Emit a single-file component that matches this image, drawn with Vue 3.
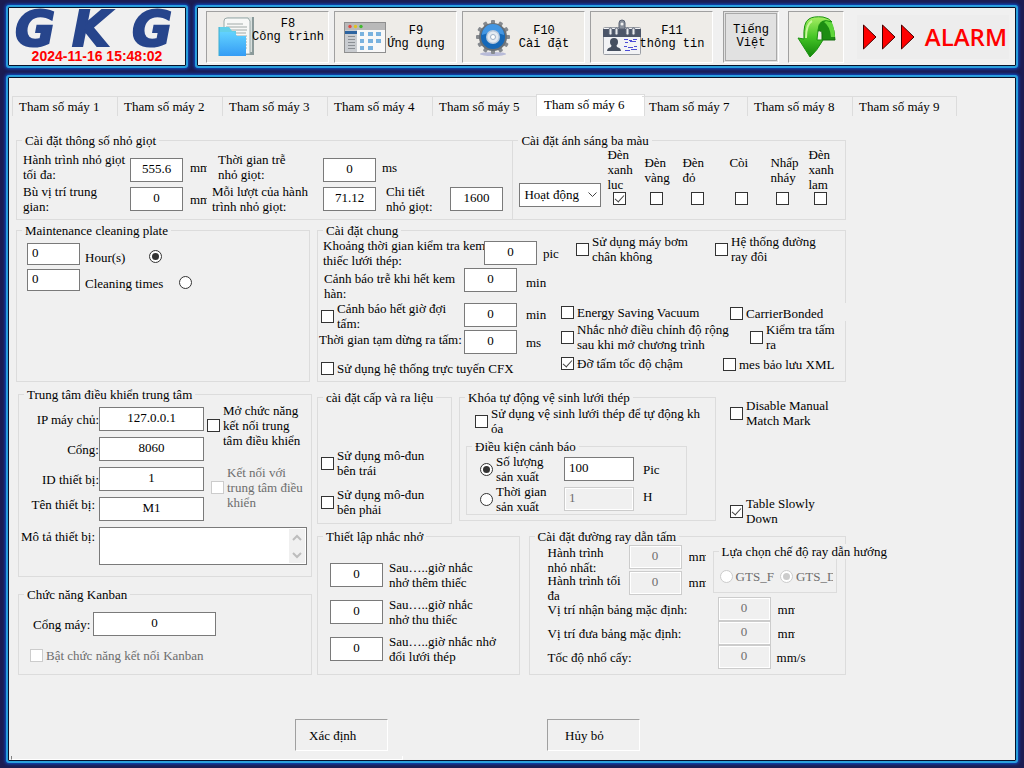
<script setup>
import { ref } from 'vue'

const activeTab = ref(6)
const hourOrTimes = ref('hour')
const alarmBy = ref('quantity')
const lamps = [
  { id: 'lamp-green', lines: 'Đèn\nxanh\nluc', on: true, cls: 'w37' },
  { id: 'lamp-yellow', lines: 'Đèn\nvàng', on: false, cls: 'w38' },
  { id: 'lamp-red', lines: 'Đèn\nđỏ', on: false, cls: 'w47' },
  { id: 'buzzer', lines: 'Còi', on: false, cls: 'w41' },
  { id: 'blink', lines: 'Nhấp\nnháy', on: false, cls: 'w38' },
  { id: 'lamp-blue', lines: 'Đèn\nxanh\nlam', on: false, cls: 'w35' }
]
const reminders = [
  { id: 'rem-add', lines: 'Sau…..giờ nhắc\nnhở thêm thiếc' },
  { id: 'rem-take', lines: 'Sau…..giờ nhắc\nnhở thu thiếc' },
  { id: 'rem-stencil', lines: 'Sau…..giờ nhắc nhở\nđổi lưới thép' }
]
const railRows = [
  { id: 'rail-in', label: 'Vị trí nhận bảng mặc định:', unit: 'mm', cut: true },
  { id: 'rail-out', label: 'Vị trí đưa bảng mặc định:', unit: 'mm', cut: true },
  { id: 'rail-speed', label: 'Tốc độ nhổ cấy:', unit: 'mm/s', cut: false }
]
const teeth = [0, 30, 60, 90, 120, 150, 180, 210, 240, 270, 300, 330]
</script>

<template>
  <div class="app">
    <header class="top">
      <section class="panel brand">
        <svg class="logo" viewBox="0 0 170 40" role="img" aria-label="GKG">
          <g class="logo-text">
            <text x="3" y="37">G</text>
            <text x="60" y="37">K</text>
            <text x="120" y="37">G</text>
          </g>
        </svg>
        <time class="clock">2024-11-16 15:48:02</time>
      </section>

      <nav class="panel toolbar">
        <button class="tool high" type="button">
          <svg viewBox="0 0 42 42" aria-hidden="true">
            <path d="M12 1 h26 v38 h-26z" fill="#8b9a9a" />
            <path d="M10 3 q0 -2 3 -2 h23 v35 h-26z" fill="#d8dfdd" />
            <path d="M8 5 q0 -3 3 -3 h21 l2 3 v33 h-26z" fill="#f7f8f7" stroke="#9aa9a8" stroke-width="1" />
            <path d="M11 8h16M10 11h21M11 14h20M12 17h18M13 20h18M25 23h6M27 26h4M28 29h3M28 32h3" stroke="#a1aaa8" stroke-width="1" />
            <path d="M3 11 h10 l3 4 h4 v25 h-17z" fill="#62cfe8" />
            <path d="M3 16 h15 l3 4 h9 v20 h-27z" fill="url(#folder)" />
            <path d="M3 40 V11" stroke="#3aaed0" />
            <defs>
              <linearGradient id="folder" x1="0" y1="0" x2="0" y2="1">
                <stop offset="0" stop-color="#62d2ff" />
                <stop offset="1" stop-color="#359cf5" />
              </linearGradient>
            </defs>
          </svg>
          <span>F8<br />Công trình</span>
        </button>
        <button class="tool" type="button">
          <svg viewBox="0 0 42 42" aria-hidden="true">
            <rect x="0.500" y="6.500" width="41" height="30" fill="#f8f8f8" stroke="#8f8f8f" />
            <rect x="1" y="7" width="40" height="7" fill="#b9b9b9" />
            <circle cx="6" cy="10.500" r="1.700" fill="#e34a44" />
            <circle cx="11.500" cy="10.500" r="1.700" fill="#e0c21f" />
            <circle cx="17" cy="10.500" r="1.700" fill="#41b92e" />
            <rect x="1" y="14" width="12" height="22" fill="#c9ccd0" />
            <rect x="1" y="15" width="12" height="3" fill="#2d64a0" />
            <path d="M4 20.500h7M4 23.500h7M4 26.500h7M4 29.500h7M4 32.500h7" stroke="#8b8f94" />
            <g fill="#79b2df">
              <rect x="16" y="16" width="4" height="4" /><rect x="24" y="16" width="5" height="4" /><rect x="32" y="16" width="5" height="4" />
              <rect x="16" y="23" width="4" height="4" /><rect x="24" y="23" width="5" height="4" /><rect x="32" y="23" width="5" height="4" />
              <rect x="16" y="30" width="4" height="4" /><rect x="24" y="30" width="5" height="4" />
            </g>
          </svg>
          <span>F9<br />Ứng dụng</span>
        </button>
        <button class="tool" type="button">
          <svg viewBox="0 0 42 42" aria-hidden="true">
            <ellipse cx="21" cy="38" rx="13" ry="2" fill="#b8bbd8" />
            <g fill="#85898e">
              <rect v-for="a in teeth" :key="a" x="19" y="4" width="4" height="6" rx="1" :transform="`rotate(${a} 21 21)`" />
            </g>
            <circle cx="21" cy="21" r="14" fill="#6a7076" />
            <circle cx="21" cy="21" r="12" fill="#1568b8" />
            <path d="M10 19 a11 11 0 0 1 22 0 q-11 -5 -22 0z" fill="#4396e2" />
            <circle cx="21" cy="21" r="7" fill="#b9c9dc" />
            <circle cx="21" cy="21" r="5.500" fill="#e4eaf1" />
            <circle cx="21" cy="21" r="2.500" fill="#fff" stroke="#9db0c6" stroke-width="1" />
          </svg>
          <span>F10<br />Cài đặt</span>
        </button>
        <button class="tool" type="button">
          <svg viewBox="0 0 42 42" aria-hidden="true">
            <rect x="3.500" y="11.500" width="37" height="27" rx="1" fill="#f2f3f5" stroke="#9a9ea5" />
            <path d="M3 13 h38 v8 h-38z" fill="#4b5568" />
            <g fill="#e9ebee" stroke="#5b6475" stroke-width="1">
              <rect x="9" y="12" width="3" height="7" rx="1.500" /><rect x="15" y="12" width="3" height="7" rx="1.500" />
              <rect x="26" y="12" width="3" height="7" rx="1.500" /><rect x="32" y="12" width="3" height="7" rx="1.500" />
            </g>
            <path d="M19 13 V7 q0 -3 3 -3 t3 3 V13z" fill="#8a919c" stroke="#5a6373" stroke-width="1" />
            <circle cx="22" cy="8" r="1.500" fill="#f0f0f0" />
            <circle cx="14" cy="26" r="4" fill="#454f5f" />
            <path d="M12 28h4l1 3q4 1 4 4h-14q0-3 4-4z" fill="#454f5f" />
            <path d="M24 23.500h4M29 24.500h3M33 23.500h4M25 26.500h3M30 25.500h6M24 30.500h3M28 31.500h5M34 30.500h3M25 34.500h5M31 33.500h6" stroke="#4c4cd6" stroke-width="1" />
          </svg>
          <span>F11<br />thông tin</span>
        </button>
        <button class="lang" type="button"><span>Tiếng<br />Việt</span></button>
        <button class="back" type="button" aria-label="Quay lại">
          <svg viewBox="0 0 54 50" aria-hidden="true">
            <defs>
              <linearGradient id="arrow" x1="0" y1="0" x2="0" y2="1">
                <stop offset="0" stop-color="#a6ee63" />
                <stop offset="0.500" stop-color="#45c526" />
                <stop offset="1" stop-color="#12850a" />
              </linearGradient>
            </defs>
            <path d="M26 12 q2 -6 8 -6 q11 1 12 22 h-13 v-6 q0 -4 -4 -3z" fill="#1d8d12" stroke="#126a0c" stroke-width="1" />
            <path d="M35 10 q6 4 7 15 h4 q-1 -16 -7 -18z" fill="#5fd53b" />
            <path d="M21 45 L9 26 l6 1 Q14 10 20 7 Q24 4 34 5 q6 1 9 5 q-13 -5 -14 8 l-1 10 h6 Q28 39 21 45z" fill="url(#arrow)" stroke="#1c9311" stroke-width="1" />
            <path d="M17 26 q0 -14 6 -17" fill="none" stroke="#c8f79b" stroke-width="2" />
          </svg>
        </button>
        <div class="alarm" role="status">
          <svg viewBox="0 0 52 26" aria-hidden="true">
            <g fill="#f00" stroke="#400" stroke-width="1">
              <path d="M0.500 1 L13 13 L0.500 25z" /><path d="M19.500 1 L32 13 L19.500 25z" /><path d="M38.500 1 L51 13 L38.500 25z" />
            </g>
          </svg>
          <span>ALARM</span>
        </div>
      </nav>
    </header>

    <main class="panel main">
      <div class="tabs" role="tablist">
        <button
          v-for="n in 9" :key="n" type="button" role="tab" class="tab"
          :class="{ active: activeTab === n }" :aria-selected="activeTab === n" @click="activeTab = n"
        >Tham số máy {{ n }}</button>
      </div>

      <form class="content" @submit.prevent>
        <div class="row first">
          <fieldset>
            <legend>Cài đặt thông số nhỏ giọt</legend>
            <div class="drip">
              <label for="drip-max">Hành trình nhỏ giọt<br />tối đa:</label>
              <input id="drip-max" class="low" type="text" value="555.6" />
              <span class="unit cut">mm</span>
              <label for="drip-delay" class="pad6">Thời gian trễ<br />nhỏ giọt:</label>
              <input id="drip-delay" class="low" type="text" value="0" />
              <span class="unit">ms</span>
              <span></span>
              <label for="drip-mid">Bù vị trí trung<br />gian:</label>
              <input id="drip-mid" type="text" value="0" />
              <span class="unit cut">mm</span>
              <label for="drip-step">Mỗi lượt của hành<br />trình nhỏ giọt:</label>
              <input id="drip-step" type="text" value="71.12" />
              <label for="drip-detail" class="pad10">Chi tiết<br />nhỏ giọt:</label>
              <input id="drip-detail" type="text" value="1600" />
            </div>
          </fieldset>
          <fieldset class="joined">
            <legend>Cài đặt ánh sáng ba màu</legend>
            <div class="lamps">
              <div class="select">
                <select aria-label="Cài đặt ánh sáng ba màu"><option>Hoạt động</option></select>
                <svg viewBox="0 0 9 5" aria-hidden="true"><path d="M0.500 0.500 L4.500 4.500 L8.500 0.500" fill="none" stroke="#444" /></svg>
              </div>
              <label v-for="l in lamps" :key="l.id" class="lamp" :class="l.cls" :for="l.id">
                <span class="lamp-name"><span>{{ l.lines }}</span></span>
                <input :id="l.id" type="checkbox" :checked="l.on" />
              </label>
            </div>
          </fieldset>
        </div>

        <div class="row second">
          <fieldset>
            <legend>Maintenance cleaning plate</legend>
            <div class="clean">
              <div class="clean-row">
                <input type="text" value="0" class="start short" aria-label="Hour(s)" />
                <label for="by-hour" class="hour">Hour(s)</label>
                <input id="by-hour" v-model="hourOrTimes" type="radio" name="clean" value="hour" />
              </div>
              <div class="clean-row">
                <input type="text" value="0" class="start short" aria-label="Cleaning times" />
                <label for="by-times" class="times">Cleaning times</label>
                <input id="by-times" v-model="hourOrTimes" type="radio" name="clean" value="times" />
              </div>
            </div>
          </fieldset>

          <fieldset>
            <legend>Cài đặt chung</legend>
            <div class="general">
              <div class="general-left">
                <div class="g-row g1">
                  <label for="g-check">Khoảng thời gian kiểm tra kem<br />thiếc lưới thép:</label>
                  <input id="g-check" type="text" value="0" /><span>pic</span>
                </div>
                <div class="g-row g2">
                  <label for="g-paste">Cảnh báo trễ khi hết kem<br />hàn:</label>
                  <input id="g-paste" type="text" value="0" /><span>min</span>
                </div>
                <div class="g-row g3">
                  <label class="check"><input type="checkbox" /><span>Cảnh báo hết giờ đợi<br />tấm:</span></label>
                  <input type="text" value="0" aria-label="Cảnh báo hết giờ đợi tấm" /><span>min</span>
                </div>
                <div class="g-row g4">
                  <label for="g-pause">Thời gian tạm dừng ra tấm:</label>
                  <input id="g-pause" type="text" value="0" /><span>ms</span>
                </div>
                <label class="check g5"><input type="checkbox" /><span>Sử dụng hệ thống trực tuyến CFX</span></label>
              </div>
              <div class="general-right">
                <div class="opts o1">
                  <label class="check w139"><input type="checkbox" /><span>Sử dụng máy bơm<br />chân không</span></label>
                  <label class="check"><input type="checkbox" /><span>Hệ thống đường<br />ray đôi</span></label>
                </div>
                <div class="opts o2">
                  <label class="check w169"><input type="checkbox" /><span>Energy Saving Vacuum</span></label>
                  <label class="check over"><input type="checkbox" /><span>CarrierBonded</span></label>
                </div>
                <div class="opts o3">
                  <label class="check w189"><input type="checkbox" /><span>Nhắc nhở điều chỉnh độ rộng<br />sau khi mở chương trình</span></label>
                  <label class="check"><input type="checkbox" /><span>Kiểm tra tấm<br />ra</span></label>
                </div>
                <div class="opts o4">
                  <label class="check w162"><input type="checkbox" checked /><span>Đỡ tấm tốc độ chậm</span></label>
                  <label class="check mes"><input type="checkbox" /><span>mes bảo lưu XML</span></label>
                </div>
              </div>
            </div>
          </fieldset>
        </div>

        <div class="row third">
          <div class="stack">
            <fieldset>
              <legend>Trung tâm điều khiển trung tâm</legend>
              <div class="center">
                <label for="c-ip">IP máy chủ:</label><input id="c-ip" type="text" value="127.0.0.1" />
                <label for="c-port">Cổng:</label><input id="c-port" type="text" value="8060" />
                <label for="c-id">ID thiết bị:</label><input id="c-id" type="text" value="1" />
                <label for="c-name" class="near">Tên thiết bị:</label><input id="c-name" type="text" value="M1" />
                <label for="c-desc" class="near desc">Mô tả thiết bị:</label>
                <div class="area">
                  <textarea id="c-desc"></textarea>
                  <svg viewBox="0 0 16 34" aria-hidden="true">
                    <rect width="16" height="34" fill="#f0f0f0" />
                    <path d="M4 11 L8 7 L12 11M4 24 L8 28 L12 24" fill="none" stroke="#bdbdbd" stroke-width="2" />
                  </svg>
                </div>
                <div class="center-opts">
                  <label class="check"><input type="checkbox" /><span>Mở chức năng<br />kết nối trung<br />tâm điều khiển</span></label>
                  <label class="check off"><input type="checkbox" disabled /><span>Kết nối với<br />trung tâm điều<br />khiển</span></label>
                </div>
              </div>
            </fieldset>
            <fieldset>
              <legend>Chức năng Kanban</legend>
              <div class="kanban">
                <div class="kanban-port">
                  <label for="k-port">Cổng máy:</label><input id="k-port" type="text" value="0" />
                </div>
                <label class="check off"><input type="checkbox" disabled /><span>Bật chức năng kết nối Kanban</span></label>
              </div>
            </fieldset>
          </div>

          <div class="side">
            <div class="side-top">
              <fieldset>
                <legend>cài đặt cấp và ra liệu</legend>
                <div class="feed">
                  <label class="check"><input type="checkbox" /><span>Sử dụng mô-đun<br />bên trái</span></label>
                  <label class="check"><input type="checkbox" /><span>Sử dụng mô-đun<br />bên phải</span></label>
                </div>
              </fieldset>
              <fieldset>
                <legend>Khóa tự động vệ sinh lưới thép</legend>
                <div class="lock">
                  <label class="check lock-use"><input type="checkbox" /><span>Sử dụng vệ sinh lưới thép để tự động kh<br />óa</span></label>
                  <fieldset class="cond">
                    <legend>Điều kiện cảnh báo</legend>
                    <div class="cond-row">
                      <label class="check"><input v-model="alarmBy" type="radio" name="cond" value="quantity" /><span>Số lượng<br />sản xuất</span></label>
                      <input type="text" value="100" class="start" aria-label="Số lượng sản xuất" /><span>Pic</span>
                    </div>
                    <div class="cond-row">
                      <label class="check"><input v-model="alarmBy" type="radio" name="cond" value="time" /><span>Thời gian<br />sản xuất</span></label>
                      <input type="text" value="1" class="start" disabled aria-label="Thời gian sản xuất" /><span class="hours">H</span>
                    </div>
                  </fieldset>
                </div>
              </fieldset>
              <div class="extra">
                <label class="check"><input type="checkbox" /><span>Disable Manual<br />Match Mark</span></label>
                <label class="check"><input type="checkbox" checked /><span>Table Slowly<br />Down</span></label>
              </div>
            </div>

            <div class="side-bottom">
              <fieldset>
                <legend>Thiết lập nhắc nhở</legend>
                <div class="remind">
                  <div v-for="r in reminders" :key="r.id" class="remind-row">
                    <input :id="r.id" type="text" value="0" /><label :for="r.id">{{ r.lines }}</label>
                  </div>
                </div>
              </fieldset>
              <fieldset>
                <legend>Cài đặt đường ray dẫn tấm</legend>
                <div class="rail">
                  <div class="rail-top">
                    <div class="rail-grid">
                      <label for="r-min">Hành trình<br />nhỏ nhất:</label><input id="r-min" type="text" value="0" disabled /><span class="unit cut">mm</span>
                      <label for="r-max" class="second-label">Hành trình tối<br />đa</label><input id="r-max" type="text" value="0" disabled /><span class="unit cut">mm</span>
                    </div>
                    <fieldset class="mode">
                      <legend>Lựa chọn chế độ ray dẫn hướng</legend>
                      <div class="mode-row">
                        <label class="check off"><input type="radio" name="gts" disabled /><span>GTS_F</span></label>
                        <label class="check off"><input type="radio" name="gts" disabled checked /><span class="clip">GTS_D</span></label>
                      </div>
                    </fieldset>
                  </div>
                  <div v-for="r in railRows" :key="r.id" class="rail-row">
                    <label :for="r.id">{{ r.label }}</label>
                    <input :id="r.id" type="text" value="0" disabled />
                    <span :class="{ unit: true, cut: r.cut }">{{ r.unit }}</span>
                  </div>
                </div>
              </fieldset>
            </div>
          </div>
        </div>

        <div class="actions">
          <button type="submit">Xác định</button>
          <button type="button" class="cancel">Hủy bỏ</button>
        </div>
      </form>
      <div class="groove"></div>
    </main>
  </div>
</template>

<style>
body {
  background: #1b1c52;
}
</style>

<style scoped>
* {
  box-sizing: border-box;
}
.app {
  display: flex;
  flex-direction: column;
  gap: 7px;
  min-height: 100vh;
  padding: 5px 6px;
  font: 13px/15px "Liberation Serif", "Times New Roman", serif;
  color: #000;
}
.panel {
  background: #f0f0f0;
  border: 2px solid #2a9fdc;
  border-radius: 3px;
  box-shadow: inset 0 0 0 1px #04122c, 0 0 3px 1px #0a4cc8;
}
.top {
  display: flex;
  gap: 7px;
}
.brand {
  display: flex;
  flex-direction: column;
  align-items: center;
  width: 182px;
  padding: 2px 4px 0;
}
.logo {
  width: 170px;
  height: 40px;
  overflow: visible;
}
.logo-text {
  font: italic bold 49px "DejaVu Sans", sans-serif;
  fill: #27458c;
  stroke: #27458c;
  stroke-width: 2px;
}
.clock {
  font: bold 14px/14px "Liberation Sans", Arial, sans-serif;
  color: #f00;
}
.toolbar {
  flex: 1;
  display: flex;
  align-items: center;
  gap: 5px;
  height: 63px;
  padding: 0 7px 0 9px;
}
button {
  font: inherit;
  color: inherit;
  margin: 0;
}
.tool,
.lang,
.back {
  height: 52px;
  padding: 0;
  font: 12px/13px "Liberation Mono", monospace;
  background: #eeece8;
  border: 1px solid;
  border-color: #a0a0a0 #fff #fff #a0a0a0;
}
.tool {
  display: flex;
  align-items: center;
  width: 123px;
  padding-left: 9px;
}
.tool svg {
  flex: none;
  width: 42px;
  height: 42px;
}
.tool span {
  flex: 1;
  position: relative;
  margin-left: -10px;
  padding-top: 2px;
  white-space: nowrap;
  text-align: center;
}
.tool.high span {
  padding: 0 0 11px;
}
.lang {
  width: 56px;
  margin-left: 5px;
  padding: 1px;
  background: #e1e1e1;
}
.lang span {
  display: flex;
  align-items: center;
  justify-content: center;
  height: 48px;
  border: 1px solid #a8a8a8;
}
.back {
  width: 56px;
  margin-left: 4px;
}
.back svg {
  display: block;
  width: 54px;
  height: 50px;
}
.alarm {
  display: flex;
  align-items: center;
  gap: 10px;
  height: 44px;
  margin-left: auto;
  padding: 0 2px 0 6px;
  background: #ededed;
  color: #f00;
  font: 600 24px/44px "Open Sans", "Noto Sans", sans-serif;
}
.alarm svg {
  width: 52px;
  height: 26px;
}
.main {
  flex: 1;
  display: flex;
  flex-direction: column;
  padding: 17px 1px 1px;
}
.tabs {
  display: flex;
  align-items: flex-end;
  padding-left: 3px;
}
.tab {
  width: 105px;
  height: 20px;
  padding: 0 0 0 6px;
  text-align: left;
  white-space: nowrap;
  background: none;
  border: solid #dcdcdc;
  border-width: 1px 0 0 1px;
}
.tab:last-child {
  border-right-width: 1px;
}
.tab.active {
  width: 109px;
  height: 22px;
  margin: 0 -3px 0 -1px;
  padding: 0 0 2px 7px;
  background: #fff;
  border-right-width: 1px;
}
.tab.active + .tab {
  border-left: 0;
  padding-left: 7px;
}
.content {
  flex: 1;
  padding: 17px 0 0 7px;
}
.row {
  display: grid;
  margin-right: 169px;
}
.first {
  grid-template-columns: 498fr 333fr;
}
.second {
  grid-template-columns: 294fr 529fr;
  gap: 7px;
  margin-top: 3px;
}
.third {
  grid-template-columns: 294px 1fr;
  gap: 5px;
  margin: 5px 169px 0 2px;
}
fieldset {
  min-width: 0;
  margin: 0;
  padding: 0;
  border: 1px solid #dcdcdc;
}
legend {
  margin-left: 5px;
  padding: 0 3px;
  line-height: 15px;
  white-space: nowrap;
}
input,
textarea,
select {
  font: inherit;
  color: inherit;
  margin: 0;
  flex: none;
}
input[type='text'] {
  width: 53px;
  height: 24px;
  padding: 0 4px 2px;
  border: 1px solid #7a7a7a;
  border-radius: 0;
  background: #fff;
  text-align: center;
}
input[type='text'].start {
  text-align: left;
}
input[type='text'].short {
  height: 22px;
}
input[type='text']:disabled {
  color: #6d6d6d;
  background: #f0f0f0;
  border-color: #ccc;
  box-shadow: inset 0 0 0 1px #fff;
}
input[type='checkbox'],
input[type='radio'] {
  appearance: none;
  display: grid;
  place-items: center;
  width: 13px;
  height: 13px;
  border: 1px solid #333;
  background: #fff;
}
input[type='radio'] {
  border-radius: 50%;
}
input[type='checkbox']:checked::before {
  content: '';
  width: 4px;
  height: 8px;
  margin-bottom: 2px;
  border: solid #444;
  border-width: 0 1px 1px 0;
  transform: rotate(42deg);
}
input[type='radio']:checked::before {
  content: '';
  width: 7px;
  height: 7px;
  border-radius: 50%;
  background: #333;
}
input[type='checkbox']:disabled,
input[type='radio']:disabled {
  border-color: #ccc;
}
input[type='radio']:disabled::before {
  background: #ccc;
}
.check {
  display: flex;
  align-items: center;
  gap: 3px;
  white-space: nowrap;
}
.off {
  color: #6d6d6d;
}
.unit {
  padding-left: 6px;
  white-space: nowrap;
}
.cut {
  width: 17px;
  padding: 0;
  margin-left: 7px;
  overflow: hidden;
}
.drip {
  display: grid;
  grid-template-columns: 107px 53px 29px 111px 53px 74px 53px;
  grid-auto-rows: 30px;
  row-gap: 2px;
  align-items: center;
  padding: 4px 0 5px 6px;
  white-space: nowrap;
}
.low {
  align-self: end;
}
.pad6 {
  padding-left: 6px;
}
.pad10 {
  padding-left: 10px;
}
.joined {
  margin-left: -1px;
}
.lamps {
  display: flex;
  align-items: flex-end;
  margin-top: -1px;
  padding: 0 0 10px 6px;
}
.select {
  position: relative;
  margin: 0 6px 1px 0;
}
.select select {
  appearance: none;
  display: block;
  width: 82px;
  height: 24px;
  padding: 0 4px 2px;
  border: 1px solid #7a7a7a;
  border-radius: 0;
  background: #fff;
}
.select svg {
  position: absolute;
  right: 4px;
  top: 9px;
  width: 9px;
  height: 5px;
}
.lamp {
  display: flex;
  flex-direction: column;
  align-items: flex-start;
}
.lamp input {
  margin: 0 0 3px 6px;
}
.lamp-name {
  display: flex;
  align-items: center;
  height: 45px;
  white-space: pre;
}
.lamp-name span {
  min-height: 30px;
}
.w35 {
  width: 35px;
}
.w37 {
  width: 37px;
}
.w38 {
  width: 38px;
}
.w41 {
  width: 41px;
}
.w47 {
  width: 47px;
}
.w47 input {
  margin-left: 9px;
}
.clean {
  display: flex;
  flex-direction: column;
  gap: 4px;
  padding: 5px 0 0 10px;
}
.clean-row {
  display: flex;
  align-items: flex-end;
}
.clean-row label {
  margin-left: 5px;
}
.clean-row input[type='radio'] {
  margin-bottom: 2px;
}
.hour {
  width: 64px;
}
.times {
  width: 94px;
}
.general {
  display: flex;
  white-space: nowrap;
}
.general-left {
  width: 243px;
  padding: 0 0 5px;
}
.g-row {
  display: flex;
}
.g1 {
  align-items: center;
  height: 30px;
  padding-left: 5px;
}
.g1 label {
  width: 161px;
}
.g1 span {
  margin-left: 6px;
}
.g2 {
  height: 34px;
  padding-left: 6px;
}
.g2 label {
  width: 140px;
  padding-top: 3px;
}
.g-row > input + span {
  padding-left: 9px;
}
.g1 > input + span {
  padding-left: 0;
}
.g2 > input + span {
  padding-top: 7px;
}
.g3 {
  align-items: center;
  height: 28px;
  padding-left: 3px;
}
.g3 .check {
  width: 143px;
}
.g3 > input,
.g3 > span {
  margin-bottom: 3px;
}
.g4 {
  align-items: center;
  padding-left: 1px;
}
.g4 label {
  width: 145px;
  padding-bottom: 6px;
}
.g5 {
  margin-top: 7px;
  padding-left: 3px;
}
.general-right {
  flex: 1;
  margin-top: -4px;
}
.opts {
  display: flex;
}
.o1 {
  padding-left: 15px;
}
.o2 {
  margin-top: 39px;
}
.over {
  position: relative;
  flex: 1;
  margin-right: -1px;
  padding-top: 3px;
  background: #f0f0f0;
}
.o3 {
  margin-top: 1px;
}
.o4 {
  margin-top: 2px;
}
.mes {
  padding-top: 3px;
}
.w139 {
  width: 139px;
}
.w169 {
  width: 169px;
}
.w189 {
  width: 189px;
}
.w162 {
  width: 162px;
}
.stack {
  display: flex;
  flex-direction: column;
  gap: 10px;
}
.center {
  display: grid;
  grid-template-columns: 80px 105px 1fr;
  grid-template-rows: repeat(4, 24px) 38px;
  row-gap: 6px;
  align-items: center;
  padding: 5px 4px 11px 0;
  white-space: nowrap;
}
.center > label {
  grid-column: 1;
  text-align: right;
}
.center > input[type='text'] {
  width: 105px;
}
.center > .near {
  align-self: start;
  padding-right: 4px;
}
.center > .desc {
  padding-top: 2px;
}
.area {
  grid-column: 2 / 4;
  display: flex;
  height: 38px;
  padding: 1px;
  border: 1px solid #7a7a7a;
  background: #fff;
}
.area textarea {
  flex: 1;
  min-width: 0;
  padding: 2px;
  border: 0;
  resize: none;
  overflow: hidden;
  background: #fff;
}
.area svg {
  width: 16px;
  height: 34px;
}
.center-opts {
  grid-column: 3;
  grid-row: 1 / 5;
  align-self: start;
  display: flex;
  flex-direction: column;
  gap: 17px;
  margin-top: -4px;
  padding-left: 3px;
}
.center-opts .off {
  padding-left: 4px;
}
.kanban {
  padding: 10px 0 11px 11px;
}
.kanban-port {
  display: flex;
  align-items: center;
  gap: 3px;
  margin-bottom: 12px;
  padding-left: 3px;
}
.kanban-port label {
  width: 57px;
  white-space: nowrap;
}
.kanban-port input[type='text'] {
  width: 123px;
}
.side {
  display: flex;
  flex-direction: column;
  padding-top: 3px;
}
.side-top {
  display: grid;
  grid-template-columns: 135px 257px 1fr;
  column-gap: 7px;
  align-items: start;
  min-height: 139px;
}
.feed {
  display: flex;
  flex-direction: column;
  gap: 9px;
  padding: 43px 0 6px 3px;
}
.lock {
  padding: 1px 28px 5px 6px;
}
.lock-use {
  padding-left: 9px;
}
.cond {
  margin-top: 3px;
}
.cond-row {
  display: flex;
  align-items: center;
  height: 30px;
  padding-left: 13px;
}
.cond-row .check {
  width: 84px;
}
.cond-row input[type='text'] {
  width: 70px;
}
.cond-row > span {
  margin-left: 9px;
}
.cond-row > .hours {
  padding-bottom: 6px;
}
.extra {
  display: flex;
  flex-direction: column;
  gap: 68px;
  padding: 8px 0 0 7px;
}
.side-bottom {
  flex: 1;
  display: grid;
  grid-template-columns: 203fr 318fr;
  gap: 9px;
}
.remind {
  display: flex;
  flex-direction: column;
  gap: 7px;
  padding: 16px 0 0 12px;
}
.remind-row {
  display: flex;
  align-items: center;
  gap: 6px;
  white-space: pre;
}
.rail {
  padding: 1px 8px 3px 18px;
  white-space: nowrap;
}
.rail-top {
  display: flex;
  align-items: flex-start;
  height: 52px;
}
.rail-grid {
  display: grid;
  grid-template-columns: 81px 53px 31px;
  grid-auto-rows: 26px;
  align-items: start;
}
.rail-grid .unit {
  padding-top: 4px;
}
.second-label {
  padding-top: 2px;
}
.mode {
  flex: 1;
  margin-top: -1px;
}
.mode legend {
  position: relative;
  width: max-content;
  background: #f0f0f0;
}
.mode-row {
  display: flex;
  gap: 6px;
  padding: 10px 4px 8px 6px;
}
.clip {
  width: 37px;
  overflow: hidden;
}
.rail-row {
  display: flex;
  align-items: center;
}
.rail-row label {
  width: 170px;
}
.actions {
  display: flex;
  gap: 159px;
  margin-top: 44px;
  padding-left: 279px;
}
.actions button {
  width: 93px;
  height: 32px;
  padding: 0 0 0 13px;
  text-align: left;
  background: #f0f0f0;
  border: 1px solid;
  border-color: #a0a0a0 #fff #fff #a0a0a0;
}
.actions .cancel {
  padding-left: 17px;
}
.groove {
  width: 39%;
  height: 4px;
  margin-left: 2px;
  border: solid;
  border-width: 0 1px 1px 1px;
  border-color: #fff #fff #fff #808080;
}
</style>
